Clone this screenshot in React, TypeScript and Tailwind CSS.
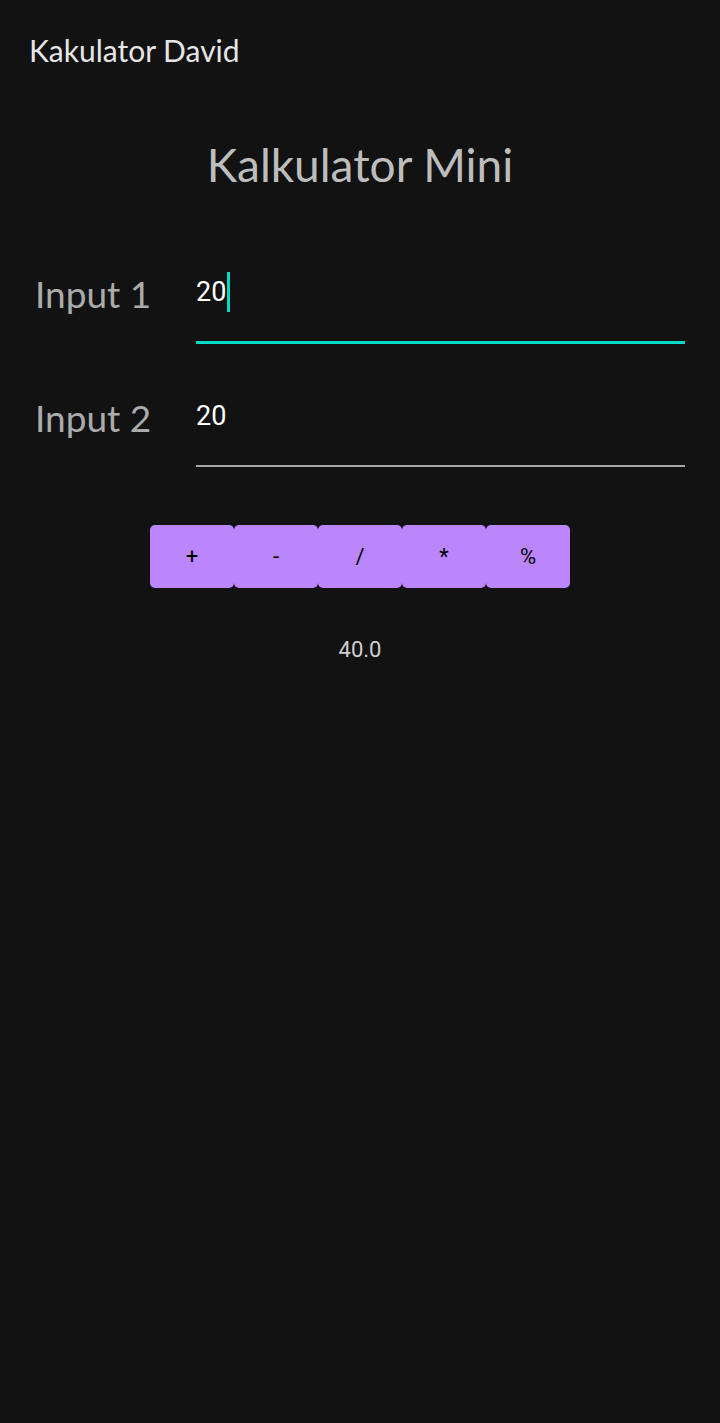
import { useState } from 'react';

const ops = ['+', '-', '/', '*', '%'];

function calc(a: number, b: number, op: string) {
  switch (op) {
    case '+':
      return a + b;
    case '-':
      return a - b;
    case '/':
      return a / b;
    case '*':
      return a * b;
    default:
      return a % b;
  }
}

export default function App() {
  const [first, setFirst] = useState('20');
  const [second, setSecond] = useState('20');
  const [result, setResult] = useState('40.0');

  return (
    <div className="min-h-[1423px] w-full bg-[#121212] font-['Lato',sans-serif]">
      <div className="pl-[29px] pt-[30px] text-[30px] leading-[40px] text-[#e6e6e6]">Kakulator David</div>

      <h1 className="mt-[65px] text-center text-[46px] leading-[60px] text-[#bdbdbd]">Kalkulator Mini</h1>

      <div className="mt-[67px] flex flex-col gap-[42px] pl-[35px] pr-[35px]">
        <div className="flex items-start">
          <label className="w-[161px] pt-[6px] text-[37px] leading-[52px] text-[#ababab]">Input 1</label>
          <div className="flex-1">
            <label className="flex h-[79px] items-start pt-[10px]">
              <input
                value={first}
                onChange={(e) => setFirst(e.target.value)}
                className="field-sizing-content min-w-[2px] bg-transparent font-['Roboto',sans-serif] text-[27px] leading-[40px] text-white caret-transparent outline-none"
              />
              <span className="ml-[1px] h-[40px] w-[3px] bg-[#03dac5]" />
            </label>
            <div className="h-[3px] bg-[#03dac5]" />
          </div>
        </div>

        <div className="flex items-start">
          <label className="w-[161px] pt-[6px] text-[37px] leading-[52px] text-[#ababab]">Input 2</label>
          <div className="flex-1">
            <div className="flex h-[79px] items-start pt-[10px]">
              <input
                value={second}
                onChange={(e) => setSecond(e.target.value)}
                className="w-full bg-transparent font-['Roboto',sans-serif] text-[27px] leading-[40px] text-white outline-none"
              />
            </div>
            <div className="h-[2px] bg-[#a6a6a6]" />
          </div>
        </div>
      </div>

      <div className="mt-[58px] flex justify-center">
        {ops.map((op) => (
          <button
            key={op}
            type="button"
            onClick={() => {
              const r = calc(parseFloat(first) || 0, parseFloat(second) || 0, op);
              setResult(Number.isInteger(r) ? r.toFixed(1) : String(r));
            }}
            className="h-[63px] w-[84px] rounded-[5px] bg-[#bb86fc] font-['Roboto',sans-serif] text-[22px] text-black"
          >
            {op}
          </button>
        ))}
      </div>

      <div className="mt-[47px] text-center font-['Roboto',sans-serif] text-[22px] leading-[30px] text-[#cfcfcf]">{result}</div>
    </div>
  );
}
